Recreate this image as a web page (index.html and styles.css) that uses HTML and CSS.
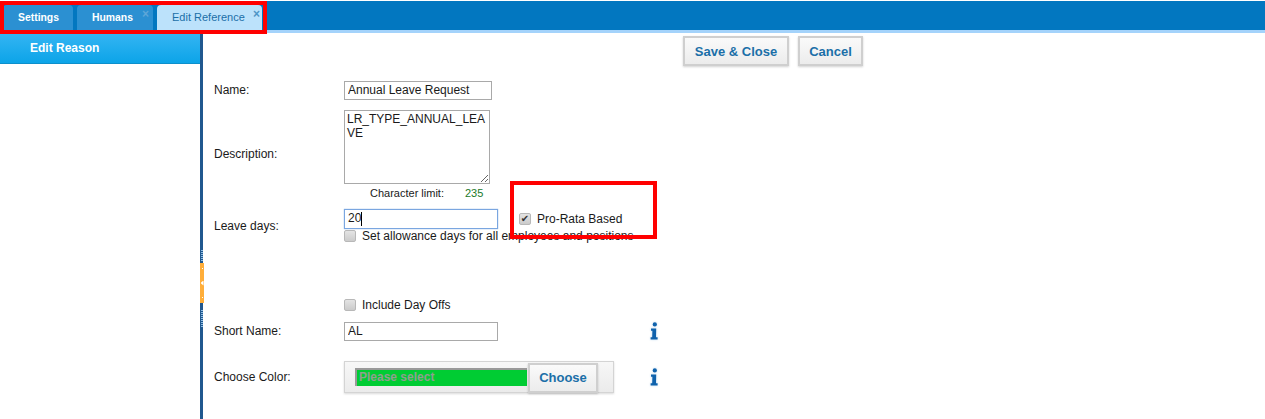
FILE: index.html
```html
<!DOCTYPE html>
<html lang="en">
<head>
<meta charset="utf-8">
<title>Edit Reference</title>
<link rel="stylesheet" href="styles.css">
</head>
<body>
<header class="tabbar">
  <nav class="tabs">
    <a class="tab tab-settings">Settings</a>
    <a class="tab tab-humans">Humans<span class="close">×</span></a>
    <a class="tab tab-active">Edit Reference<span class="close">×</span></a>
  </nav>
</header>
<div class="main">
  <aside class="sidebar"><div class="side-head">Edit Reason</div></aside>
  <div class="splitter"><div class="grip"><span class="dot"></span><span class="arrow"></span><span class="dot"></span></div></div>
  <section class="content">
    <div class="toolbar">
      <button class="btn btn-save">Save &amp; Close</button>
      <button class="btn btn-cancel">Cancel</button>
    </div>
    <div class="row row-name">
      <label class="lbl">Name:</label>
      <input class="field field-name" value="Annual Leave Request">
    </div>
    <div class="row row-desc">
      <label class="lbl lbl-desc">Description:</label>
      <textarea class="area">LR_TYPE_ANNUAL_LEAVE</textarea>
    </div>
    <div class="limit"><span class="limit-label">Character limit:</span><span class="limit-num">235</span></div>
    <div class="row row-days">
      <label class="lbl">Leave days:</label>
      <div class="days-col">
        <div class="days-top">
          <div class="caret-wrap"><input class="field field-days" value="20"><span class="caret"></span></div>
          <label class="check check-rata"><input type="checkbox" checked><span>Pro-Rata Based</span></label>
        </div>
        <label class="check"><input type="checkbox"><span>Set allowance days for all employees and positions</span></label>
      </div>
    </div>
    <div class="row row-off">
      <label class="check"><input type="checkbox"><span>Include Day Offs</span></label>
    </div>
    <div class="row row-short">
      <label class="lbl">Short Name:</label>
      <input class="field field-days" value="AL">
      <svg class="info info-short" viewBox="0 0 10 18" width="10" height="18"><circle cx="5.8" cy="2.4" r="2.1"/><path d="M2 6.5h5.2L7 15.2h1.6V17.6H1.6V15.2H3.2L3.4 8.8H2z"/></svg>
    </div>
    <div class="row row-color">
      <label class="lbl lbl-color">Choose Color:</label>
      <div class="colorbox">
        <input class="colorfield" placeholder="Please select">
        <button class="btn btn-choose">Choose</button>
      </div>
      <svg class="info info-color" viewBox="0 0 10 18" width="10" height="18"><circle cx="5.8" cy="2.4" r="2.1"/><path d="M2 6.5h5.2L7 15.2h1.6V17.6H1.6V15.2H3.2L3.4 8.8H2z"/></svg>
    </div>
  </section>
</div>
<div class="mark mark-tabs"></div>
<div class="mark mark-rata"></div>
</body>
</html>
```

FILE: styles.css
```css
* { box-sizing: border-box; }
html, body { height: 100%; }
body {
  margin: 0;
  height: 419px;
  overflow: hidden;
  background: #fff;
  font-family: "Liberation Sans", Arial, sans-serif;
  font-size: 12px;
  color: #1a1a1a;
}
.tabbar {
  height: 33px;
  padding-top: 1px;
  background: #0277c0;
  border-bottom: 3px solid #a4d3fb;
  box-shadow: inset 0 1px 0 #fff;
}
.tabs { display: flex; gap: 4px; padding: 4px 0 0 3px; height: 29px; }
.tab {
  position: relative;
  height: 25px;
  line-height: 25px;
  border-radius: 4px 4px 0 0;
  background: #2b90d2;
  color: #fff;
  font-weight: bold;
  font-size: 10.4px;
}
.tab-settings { width: 70px; padding-left: 15px; }
.tab-humans { width: 76px; padding-left: 15px; }
.tab-active {
  width: 105px;
  padding-left: 15px;
  line-height: 24px;
  background: #bce2fb;
  color: #1b6fa8;
  font-weight: normal;
  font-size: 11px;
}
.close {
  position: absolute;
  right: 4px;
  top: -3px;
  color: #5da6d8;
  font-weight: bold;
  font-size: 12px;
}
.tab-active .close { color: #4e95c6; right: 2px; }
.main { display: flex; height: 386px; }
.sidebar { width: 200px; flex: none; }
.side-head {
  height: 31px;
  padding-left: 30px;
  line-height: 30px;
  background: linear-gradient(#35b5f3, #0ca4e8);
  border-bottom: 1px solid #0d8fcb;
  color: #fff;
  font-weight: bold;
  font-size: 12px;
}
.splitter { width: 3px; flex: none; background: #20588f; padding-top: 230px; }
.grip {
  position: relative;
  z-index: 1;
  width: 4px;
  height: 40px;
  background: #ffae3a;
  display: flex;
  flex-direction: column;
  justify-content: space-between;
  align-items: center;
  padding: 5px 0;
}
.grip::before,
.grip::after {
  content: "";
  position: absolute;
  left: 1px;
  width: 2px;
  background: repeating-linear-gradient(#8fbde4 0 1px, #20588f 1px 2px);
}
.grip::before { top: -13px; height: 12px; }
.grip::after { top: 47px; height: 17px; }
.dot { width: 1px; height: 1px; background: #fff; }
.arrow { width: 3px; height: 5px; background: #fff; clip-path: polygon(100% 0, 0 50%, 100% 100%); }
.content { flex: 1; padding: 3px 0 0 11px; }
.toolbar { display: flex; gap: 9px; padding-left: 469px; height: 30px; }
.btn {
  height: 30px;
  padding: 0;
  border: 2px solid #cfcfcf;
  background: linear-gradient(#fafafa, #ececec);
  box-shadow: 0 1px 2px rgba(0,0,0,.18);
  color: #1b6fa8;
  font-family: inherit;
  font-size: 13px;
  font-weight: bold;
}
.btn-save { width: 106px; }
.btn-cancel { width: 65px; }
.row { display: flex; align-items: center; }
.lbl { width: 130px; flex: none; padding-bottom: 2px; }
.lbl-desc { padding-top: 14px; padding-bottom: 0; }
.lbl-color { padding-bottom: 0; }
.field {
  height: 19px;
  padding: 0 3px 2px;
  border: 1px solid #a9a9a9;
  font-family: inherit;
  font-size: 12px;
  color: #1a1a1a;
  outline: none;
}
.field-name { width: 148px; }
.field-days { width: 154px; display: block; }
.row-name { margin-top: 15px; height: 19px; }
.row-desc { margin-top: 10px; height: 74px; }
.area {
  width: 146px;
  height: 74px;
  padding: 1px 2px;
  border: 1px solid #a9a9a9;
  font-family: inherit;
  font-size: 12px;
  line-height: 14px;
  color: #1a1a1a;
  word-break: break-all;
  outline: none;
  overflow: hidden;
}
.limit { display: flex; height: 19px; padding: 2px 0 0 156px; line-height: 14px; font-size: 11px; }
.limit-label { width: 95px; }
.limit-num { color: #1a7a2a; }
.row-days { margin-top: 6px; align-items: flex-start; height: 33px; }
.row-days .lbl { padding-top: 10px; }
.days-top { display: flex; align-items: center; }
.caret-wrap { position: relative; }
.days-top .field {
  height: 20px;
  border-color: #7aa6e0;
  box-shadow: 0 0 1px #7aa6e0;
}
.caret {
  position: absolute;
  left: 17px;
  top: 3px;
  width: 1px;
  height: 14px;
  background: #000;
}
.check { display: flex; align-items: center; height: 13px; }
.check input {
  appearance: none;
  display: flex;
  align-items: center;
  justify-content: center;
  width: 12px;
  height: 12px;
  margin: 0 6px 0 0;
  border: 1px solid #b8b8b8;
  border-radius: 2px;
  background: linear-gradient(#e4e4e4, #cbcbcb);
}
.check input:checked::before {
  content: "✔";
  font-family: "DejaVu Sans", sans-serif;
  font-size: 10px;
  line-height: 10px;
  color: #333;
}
.check-rata { margin-left: 21px; margin-top: 0; padding-bottom: 1px; }
.row-off { margin-top: 56px; padding-left: 130px; height: 13px; }
.row-short { margin-top: 11px; height: 19px; }
.info { flex: none; fill: #0f62ac; filter: drop-shadow(0 0 1px #bcd7ee); }
.info-short { margin-left: 151px; margin-bottom: 2px; }
.info-color { margin-left: 35px; }
.row-color { margin-top: 20px; height: 32px; }
.colorbox {
  display: flex;
  width: 270px;
  height: 32px;
  padding: 1px 0 0 10px;
  border: 1px solid #d4d4d4;
  background: linear-gradient(#f7f7f7, #ebebeb);
  box-shadow: 0 1px 2px rgba(0,0,0,.15);
}
.colorfield {
  width: 172px;
  height: 18px;
  margin-top: 5px;
  padding: 0 2px 2px;
  border: 0;
  border-top: 2px solid #999;
  border-left: 2px solid #999;
  background: #00cc33;
  font-family: inherit;
  font-size: 12px;
  font-weight: bold;
  outline: none;
}
.colorfield::placeholder { color: #8f9f8f; }
.btn-choose { width: 70px; height: 30px; margin-left: 1px; padding-bottom: 1px; }
.mark { position: absolute; border: 4px solid #ff0000; pointer-events: none; }
.mark-tabs { left: 0; top: 1px; width: 267px; height: 33px; }
.mark-rata { left: 510px; top: 181px; width: 147px; height: 58px; }
```
